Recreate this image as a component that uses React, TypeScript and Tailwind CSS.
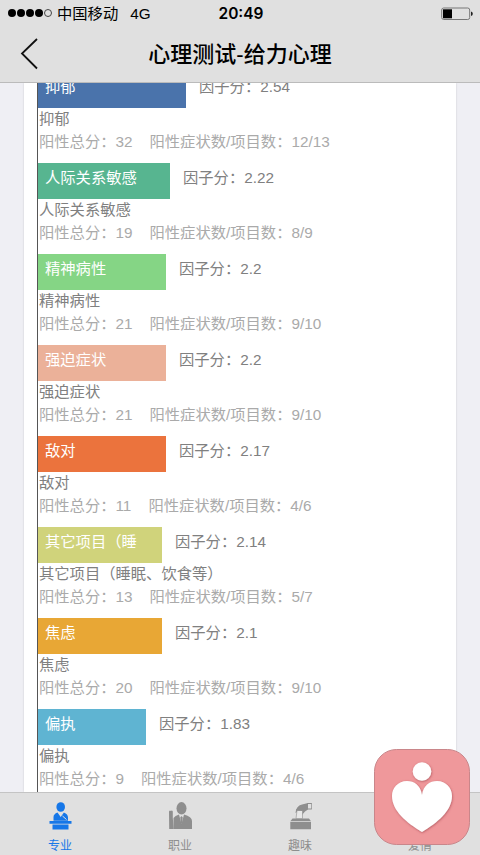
import type { ReactNode } from "react";

type Factor = {
  name: string;
  barLabel?: string;
  score: string;
  total: number;
  positive: string;
  width: string;
  color: string;
};

const factors: Factor[] = [
  { name: "抑郁", score: "2.54", total: 32, positive: "12/13", width: "w-[148px]", color: "bg-[#4a73ab]" },
  { name: "人际关系敏感", score: "2.22", total: 19, positive: "8/9", width: "w-[132px]", color: "bg-[#57b590]" },
  { name: "精神病性", score: "2.2", total: 21, positive: "9/10", width: "w-[128px]", color: "bg-[#85d585]" },
  { name: "强迫症状", score: "2.2", total: 21, positive: "9/10", width: "w-[128px]", color: "bg-[#ebb199]" },
  { name: "敌对", score: "2.17", total: 11, positive: "4/6", width: "w-[128px]", color: "bg-[#eb733d]" },
  {
    name: "其它项目（睡眠、饮食等）",
    barLabel: "其它项目（睡",
    score: "2.14",
    total: 13,
    positive: "5/7",
    width: "w-[124px]",
    color: "bg-[#d0d37b]",
  },
  { name: "焦虑", score: "2.1", total: 20, positive: "9/10", width: "w-[124px]", color: "bg-[#e8a735]" },
  { name: "偏执", score: "1.83", total: 9, positive: "4/6", width: "w-[108px]", color: "bg-[#5fb4d2]" },
];

function StatusBar() {
  return (
    <div className="grid h-[27px] grid-cols-3 items-center pr-[7px] pl-2 text-[15.3px] leading-none text-black">
      <div className="flex items-center whitespace-nowrap">
        <div className="flex gap-[1px]">
          <i className="size-[8px] rounded-full bg-black" />
          <i className="size-[8px] rounded-full bg-black" />
          <i className="size-[8px] rounded-full bg-black" />
          <i className="size-[8px] rounded-full bg-black" />
          <i className="size-[8px] rounded-full border border-[#444]" />
        </div>
        <span className="ml-[5px]">中国移动</span>
        <span className="ml-3">4G</span>
      </div>
      <span className="pl-[1px] text-center font-[Inter] text-[15.5px] font-semibold">20:49</span>
      <svg className="justify-self-end" width="32" height="14" viewBox="0 0 32 14">
        <rect x="0.7" y="1" width="28" height="11.5" rx="2" fill="none" stroke="#777" />
        <rect x="2" y="2.3" width="9" height="9" fill="#000" />
        <path d="M30 4.5q1.8.5 1.8 2.2T30 9z" fill="#222" />
      </svg>
    </div>
  );
}

function FactorRow({ factor }: { factor: Factor }) {
  return (
    <div className="mb-[9px] text-[15.3px] whitespace-nowrap">
      <div className="flex h-9">
        <div className={`${factor.width} ${factor.color} pl-[7px] leading-[30px] text-white`}>
          {factor.barLabel ?? factor.name}
        </div>
        <span className="ml-[13px] leading-[30px] text-[#808080]">因子分：{factor.score}</span>
      </div>
      <p className="h-[23px] pl-px leading-[22px] text-[#808080]">{factor.name}</p>
      <p className="h-[23px] pl-px leading-[22px] text-[#aaa]">
        阳性总分：{factor.total}
        <span className="ml-[17px]">阳性症状数/项目数：{factor.positive}</span>
      </p>
    </div>
  );
}

function Tab({ label, active, children }: { label: string; active?: boolean; children?: ReactNode }) {
  return (
    <div className={`flex flex-1 flex-col items-center pt-[9px] ${active ? "text-[#1677e8]" : "text-[#8e8e8e]"}`}>
      <svg className="h-7 w-6" viewBox="0 0 24 28" fill="currentColor">
        {children}
      </svg>
      <span className="mt-[8px] text-[12px] leading-[16px]">{label}</span>
    </div>
  );
}

function FloatingBadge() {
  return (
    <svg className="absolute top-[748px] left-[373px]" width="98" height="98" viewBox="0 0 98 98">
      <defs>
        <filter id="soft" x="-20%" y="-20%" width="140%" height="140%">
          <feDropShadow dx="0.5" dy="0.8" stdDeviation="1" floodColor="#9b3f48" floodOpacity="0.7" />
        </filter>
      </defs>
      <rect x="1.5" y="1.5" width="95" height="95" rx="22" fill="#ef989b" stroke="#c9868a" />
      <g fill="#fff" filter="url(#soft)">
        <circle cx="49" cy="23.5" r="9.3" />
        <path d="M49 47C47.5 37 41 33 34 33C25 33 19 40 19 48C19 63 34 75 49 84C64 75 79 63 79 48C79 40 73 33 64 33C57 33 50.5 37 49 47Z" />
      </g>
    </svg>
  );
}

export default function App() {
  return (
    <div className="relative flex h-[855px] w-[480px] flex-col overflow-hidden bg-[#efeff4] font-['Liberation_Sans','Noto_Sans_CJK_SC',sans-serif]">
      <header className="h-[83px] shrink-0 border-b border-[#bbb] bg-[#e0e0e0]">
        <StatusBar />
        <div className="grid h-[54px] grid-cols-[80px_1fr_80px] items-center">
          <svg className="ml-5" width="20" height="34" viewBox="0 0 20 34" fill="none" stroke="#111" strokeWidth="1.8">
            <path d="M17 2L2 16.5L17 31.5" />
          </svg>
          <h1 className="text-center text-[22px] font-medium whitespace-nowrap text-black">心理测试-给力心理</h1>
        </div>
      </header>

      <main className="min-h-0 flex-1 overflow-hidden px-6">
        <div className="h-full bg-white pl-[13px] shadow-[0_0_2px_rgba(0,0,0,0.15)]">
          <div className="h-full border-l-[1.5px] border-[#555]">
            <div className="-translate-y-[11px]">
              {factors.map((factor) => (
                <FactorRow key={factor.name} factor={factor} />
              ))}
            </div>
          </div>
        </div>
      </main>

      <nav className="flex h-[63px] shrink-0 border-t border-[#c4c4c4] bg-[#e0e0e0]">
        <Tab label="专业" active>
          <ellipse cx="12.7" cy="5" rx="4.3" ry="4.8" />
          <path d="M5.5 18.8V15q0-3 4-4.5L12.7 15l3.2-4.5Q20 12 20 15.5v3.3z" />
          <path d="M14.5 14l4 3.5" stroke="#e0e0e0" strokeWidth="1" />
          <path d="M1.5 19h22v2.8h-22zM4.5 22.4h16v5.1h-16z" />
        </Tab>
        <Tab label="职业">
          <ellipse cx="13.5" cy="6.3" rx="5" ry="6.2" />
          <path d="M5.5 27V16q1.5-2.3 5.5-3.5L13.5 22l2.5-9.5Q24 14.5 24 19v8z" />
          <path d="M13.5 14l1.2 1.5-.5 5-.7 2-.7-2-.5-5z" />
          <path d="M1 9.500q.8-1.500 1.800-.5 1.500-1 2 .5v6.500l.9 11H1.200z" />
        </Tab>
        <Tab label="趣味">
          <path d="M2.300 19.200L4.500 16.500h16.500l2 2.700zM2.300 20h20.700v7.200H2.300z" />
          <path d="M7.500 11q.5-7 6.500-8.500l6-1.500v6.500L17 9.500l-3 3.500V7.500z" />
          <path d="M9 8.500h5.500v8H8z" fill="#e8e8e8" stroke="currentColor" strokeWidth="0.6" />
          <path d="M8 8q3-5 7-5l-.5 6z" />
          <path d="M19.500 1.500h4.300v5.500h-4.300z" fill="none" stroke="currentColor" />
        </Tab>
        <Tab label="爱情" />
      </nav>

      <FloatingBadge />
    </div>
  );
}
